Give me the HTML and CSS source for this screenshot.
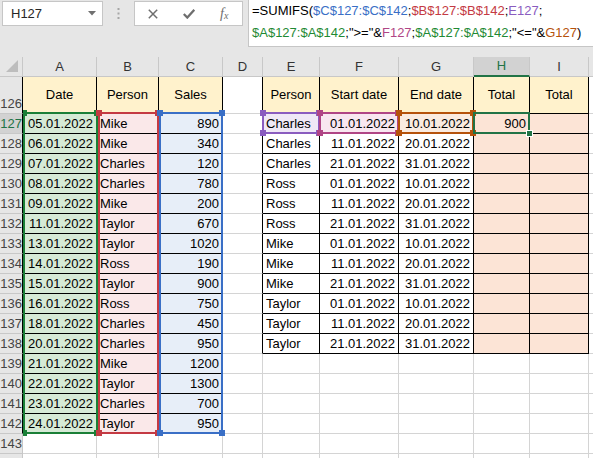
FILE: index.html
```html
<!DOCTYPE html>
<html lang="en">
<head>
    <meta charset="UTF-8">
    <title>SUMIFS by period</title>
    <link rel="stylesheet" href="styles.css">
</head>
<body>
    <div class="toolbar">
        <div class="name-box">
            <span>H127</span>
            <svg width="8" height="5" viewBox="0 0 8 5"><path d="M0 0 H8 L4 4.5 Z" fill="#707070"/></svg>
        </div>
        <div class="grip">
            <svg width="3" height="11" viewBox="0 0 3 11"><rect x="0.5" y="0" width="2" height="2" fill="#a6a6a6"/><rect x="0.5" y="4.5" width="2" height="2" fill="#a6a6a6"/><rect x="0.5" y="9" width="2" height="2" fill="#a6a6a6"/></svg>
        </div>
        <div class="fx-buttons">
            <svg width="10" height="10" viewBox="0 0 10 10"><path d="M0.8 0.8 L9.2 9.2 M9.2 0.8 L0.8 9.2" stroke="#6e6e6e" stroke-width="1.5" fill="none"/></svg>
            <svg width="12" height="10" viewBox="0 0 12 10"><path d="M0.8 5 L4.3 8.6 L11.3 0.8" stroke="#6e6e6e" stroke-width="2.2" fill="none"/></svg>
            <span class="fx">f<sub>x</sub></span>
        </div>
        <div class="formula">
            =SUMIFS(<span class="ref-blue">$C$127:$C$142</span>;<span class="ref-red">$B$127:$B$142</span>;<span class="ref-purple">E127</span>;<br>
            <span class="ref-green">$A$127:$A$142</span>;"&gt;="&amp;<span class="ref-magenta">F127</span>;<span class="ref-green">$A$127:$A$142</span>;"&lt;="&amp;<span class="ref-orange">G127</span>)
        </div>
    </div>

    <div class="sheet">
        <div class="grid" id="grid"></div>

        <!-- formula reference highlights and the active cell -->
        <div class="ranges">
            <div class="range range-a"><i class="tl"></i><i class="tr"></i><i class="bl"></i><i class="br"></i></div>
            <div class="range range-b"><i class="tl"></i><i class="tr"></i><i class="bl"></i><i class="br"></i></div>
            <div class="range range-c"><i class="tl"></i><i class="tr"></i><i class="bl"></i><i class="br"></i></div>
            <div class="range range-e"><i class="tl"></i><i class="tr"></i><i class="bl"></i><i class="br"></i></div>
            <div class="range range-f"><i class="tl"></i><i class="tr"></i><i class="bl"></i><i class="br"></i></div>
            <div class="range range-g"><i class="tl"></i><i class="tr"></i><i class="bl"></i><i class="br"></i></div>
            <div class="selection"><i class="handle"></i></div>
        </div>
    </div>

    <script>
        const grid = document.getElementById('grid');

        const letters = ['A', 'B', 'C', 'D', 'E', 'F', 'G', 'H', 'I', ''];
        const sales = [
            ['05.01.2022', 'Mike', 890],
            ['06.01.2022', 'Mike', 340],
            ['07.01.2022', 'Charles', 120],
            ['08.01.2022', 'Charles', 780],
            ['09.01.2022', 'Mike', 200],
            ['11.01.2022', 'Taylor', 670],
            ['13.01.2022', 'Taylor', 1020],
            ['14.01.2022', 'Ross', 190],
            ['15.01.2022', 'Taylor', 900],
            ['16.01.2022', 'Ross', 750],
            ['18.01.2022', 'Charles', 450],
            ['20.01.2022', 'Charles', 950],
            ['21.01.2022', 'Mike', 1200],
            ['22.01.2022', 'Taylor', 1300],
            ['23.01.2022', 'Charles', 700],
            ['24.01.2022', 'Taylor', 950]
        ];
        const people = ['Charles', 'Ross', 'Mike', 'Taylor'];
        const periods = [
            ['01.01.2022', '10.01.2022'],
            ['11.01.2022', '20.01.2022'],
            ['21.01.2022', '31.01.2022']
        ];

        function addCell(className, text) {
            const cell = document.createElement('div');
            cell.className = 'cell ' + className;
            cell.textContent = text;
            grid.appendChild(cell);
            return cell;
        }

        // column headers
        addCell('corner', '').innerHTML =
            '<svg width="13" height="13" viewBox="0 0 13 13"><path d="M12 0 V12 H0 Z" fill="#bdbdbd"/></svg>';
        letters.forEach(l => addCell('col-head' + (l === 'H' ? ' active' : ''), l));

        for (let row = 126; row <= 144; row++) {
            const i = row - 127;
            let rowClass = 'row-head';
            if (row <= 142) rowClass += ' edge';
            if (row === 127) rowClass += ' active';
            if (row === 126) rowClass += ' bottom';
            // the last row only peeks in at the bottom edge, its number is out of view
            addCell(rowClass, row < 144 ? row : '');

            if (row === 126) {
                ['Date', 'Person', 'Sales'].forEach(t => addCell('t head', t));
                addCell('edge', '');
                ['Person', 'Start date', 'End date', 'Total', 'Total'].forEach(t => addCell('t head', t));
                addCell('', '');
                continue;
            }

            const s = sales[i];
            if (s) {
                addCell('t num fill-a', s[0]);
                addCell('t fill-b', s[1]);
                addCell('t num fill-c', s[2]);
            } else {
                addCell('', ''); addCell('', ''); addCell('', '');
            }

            if (row <= 138) {
                const p = periods[i % 3];
                addCell('edge', '');
                addCell('t' + (i === 0 ? ' fill-e' : ''), people[Math.floor(i / 3)]);
                addCell('t num' + (i === 0 ? ' fill-f' : ''), p[0]);
                addCell('t num' + (i === 0 ? ' fill-g' : ''), p[1]);
                addCell('t num fill-total', i === 0 ? 900 : '');
                addCell('t fill-total', '');
            } else {
                for (let k = 0; k < 6; k++) addCell('', '');
            }
            addCell('', '');
        }
    </script>
</body>
</html>
```

FILE: styles.css
```css
* {
    margin: 0;
    padding: 0;
    box-sizing: border-box;
}

body {
    width: 593px;
    height: 458px;
    overflow: hidden;
    background: #fff;
    color: #000;
    font-family: "Liberation Sans", Arial, sans-serif;
    font-size: 13px;
}

/* Formula bar */
.toolbar {
    display: flex;
    align-items: flex-start;
    height: 57px;
    background: #e6e6e6;
}

.name-box {
    display: flex;
    align-items: center;
    justify-content: space-between;
    width: 101px;
    height: 25px;
    margin: 1px 0 0 2px;
    padding: 0 6px 0 8px;
    background: #fff;
    border: 1px solid #c6c6c6;
    color: #262626;
}

.grip {
    display: flex;
    justify-content: center;
    width: 31px;
    padding-top: 8px;
}

.fx-buttons {
    display: flex;
    align-items: center;
    gap: 25px;
    width: 109px;
    height: 25px;
    margin-top: 1px;
    padding-left: 13px;
    background: #fff;
    border: 1px solid #c6c6c6;
}

.fx {
    font-family: "Liberation Serif", serif;
    font-style: italic;
    font-size: 14px;
    color: #6e6e6e;
    line-height: 1;
}

.fx sub {
    font-size: 10px;
    vertical-align: -1px;
}

.formula {
    flex: 1;
    height: 47px;
    margin-left: 5px;
    padding-left: 3px;
    background: #fff;
    border-left: 1px solid #c6c6c6;
    border-bottom: 1px solid #c6c6c6;
    line-height: 22px;
    white-space: nowrap;
    overflow: hidden;
}

.ref-blue { color: #3a6fc6; }
.ref-red { color: #c43a43; }
.ref-purple { color: #8a5cbf; }
.ref-green { color: #1f8a34; }
.ref-magenta { color: #b04585; }
.ref-orange { color: #b5520b; }

/* Sheet grid */
.sheet {
    position: relative;
    height: 401px;
    overflow: hidden;
}

.grid {
    display: grid;
    grid-template-columns: 23px 74px 62px 64px 40px 57px 79px 75px 56px 59px 1fr;
    grid-template-rows: 20px 37px repeat(18, 20px);
}

.cell {
    padding: 0 3px;
    border-right: 1px solid #d4d4d4;
    border-bottom: 1px solid #d4d4d4;
    line-height: 19px;
    white-space: nowrap;
    overflow: hidden;
}

.corner {
    display: flex;
    align-items: flex-end;
    justify-content: flex-end;
    padding: 0 3px 3px 0;
    background: #e6e6e6;
    border-color: #c8c8c8;
}

.col-head {
    background: #e6e6e6;
    border-color: #c8c8c8;
    color: #333;
    text-align: center;
}

.col-head.active {
    background: #d2d2d2;
    color: #217346;
    border-bottom: 2px solid #217346;
    line-height: 18px;
}

.row-head {
    padding: 0;
    background: #e6e6e6;
    border-color: #c8c8c8;
    color: #444;
    text-align: right;
}

.row-head.bottom {
    padding-top: 17px;
}

.row-head.active {
    background: #d2d2d2;
    color: #217346;
}

.edge {
    border-right-color: #000;
}

.t {
    border-right-color: #000;
    border-bottom-color: #000;
}

.head {
    background: #fff2cc;
    text-align: center;
    line-height: 36px;
}

.num {
    text-align: right;
}

.fill-a { background: #d6ead6; }
.fill-b { background: #fae8e9; }
.fill-c { background: #e7eef8; }
.fill-e { background: #efe8f6; }
.fill-f { background: #f8e7f0; }
.fill-g { background: #faebe0; }
.fill-total { background: #fce4d6; }

/* Reference highlights drawn over the cells */
.ranges {
    position: absolute;
    left: 23px;
    top: 20px;
    right: 0;
    bottom: 0;
    overflow: hidden;
    pointer-events: none;
}

.range,
.selection {
    position: absolute;
    top: 35px;
    height: 22px;
    border: 2px solid currentColor;
}

.range i {
    position: absolute;
    width: 6px;
    height: 6px;
    background: currentColor;
}

.range .tl { left: -4px; top: -4px; }
.range .tr { right: -4px; top: -4px; }
.range .bl { left: -4px; bottom: -4px; }
.range .br { right: -4px; bottom: -4px; }

.range-a { left: 0; width: 75px; height: 322px; color: #1a7f37; }
.range-b { left: 75px; width: 61px; height: 322px; color: #c43a43; }
.range-c { left: 136px; width: 64px; height: 322px; color: #3a6fc6; }
.range-e { left: 239px; width: 58px; color: #8a5cbf; }
.range-f { left: 296px; width: 80px; color: #b04585; }
.range-g { left: 375px; width: 76px; color: #b5520b; }

.selection {
    left: 450px;
    width: 57px;
    color: #217346;
}

.selection .handle {
    position: absolute;
    right: -5px;
    bottom: -5px;
    width: 7px;
    height: 7px;
    background: #217346;
    border: 1px solid #fff;
}
```
